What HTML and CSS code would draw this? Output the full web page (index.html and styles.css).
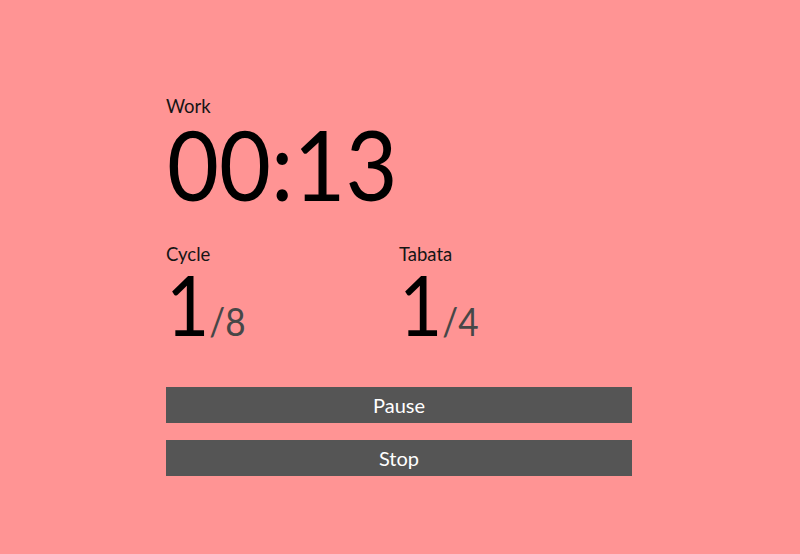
FILE: index.html
```html
<!DOCTYPE html>
<html lang="en">
<head>
<meta charset="utf-8">
<title>Tabata Timer</title>
<link rel="stylesheet" href="styles.css">
</head>
<body>
<main class="timer">
  <div class="label">Work</div>
  <div class="time"><span class="narrow wide">00:13</span></div>
  <div class="stats">
    <div class="stat">
      <div class="label">Cycle</div>
      <div class="count"><span class="narrow">1<span class="total">/8</span></span></div>
    </div>
    <div class="stat">
      <div class="label">Tabata</div>
      <div class="count"><span class="narrow">1<span class="total">/4</span></span></div>
    </div>
  </div>
  <div class="actions">
    <button class="btn">Pause</button>
    <button class="btn">Stop</button>
  </div>
</main>
</body>
</html>
```
FILE: styles.css
```css
html, body {
  margin: 0;
  padding: 0;
  background: #ff9494;
  height: 100%;
}
body {
  font-family: Lato, "Noto Sans", sans-serif;
  color: #111;
}
.timer {
  width: 466px;
  margin: 0 auto;
  padding-top: 95px;
  position: relative;
  left: -1px;
}
.label {
  font-size: 18.5px;
  line-height: 22px;
  color: #151515;
}
.narrow {
  display: inline-block;
  transform: scaleX(0.9);
  transform-origin: left center;
}
.narrow.wide {
  transform: scaleX(0.925);
  margin-left: 1px;
}
.time {
  font-size: 97px;
  line-height: 94px;
  color: #000;
}
.stats {
  display: grid;
  grid-template-columns: 1fr 1fr;
  margin-top: 32px;
}
.count {
  font-size: 83px;
  line-height: 79px;
  color: #000;
}
.total {
  font-size: 39px;
  line-height: 1;
  color: #474747;
}
.actions {
  display: flex;
  flex-direction: column;
  gap: 17px;
  margin-top: 43px;
}
.btn {
  display: flex;
  align-items: center;
  justify-content: center;
  height: 36px;
  border: 0;
  padding: 0;
  background: #555555;
  color: #fff;
  font-family: Lato, "Noto Sans", sans-serif;
  font-size: 20px;
}
```
